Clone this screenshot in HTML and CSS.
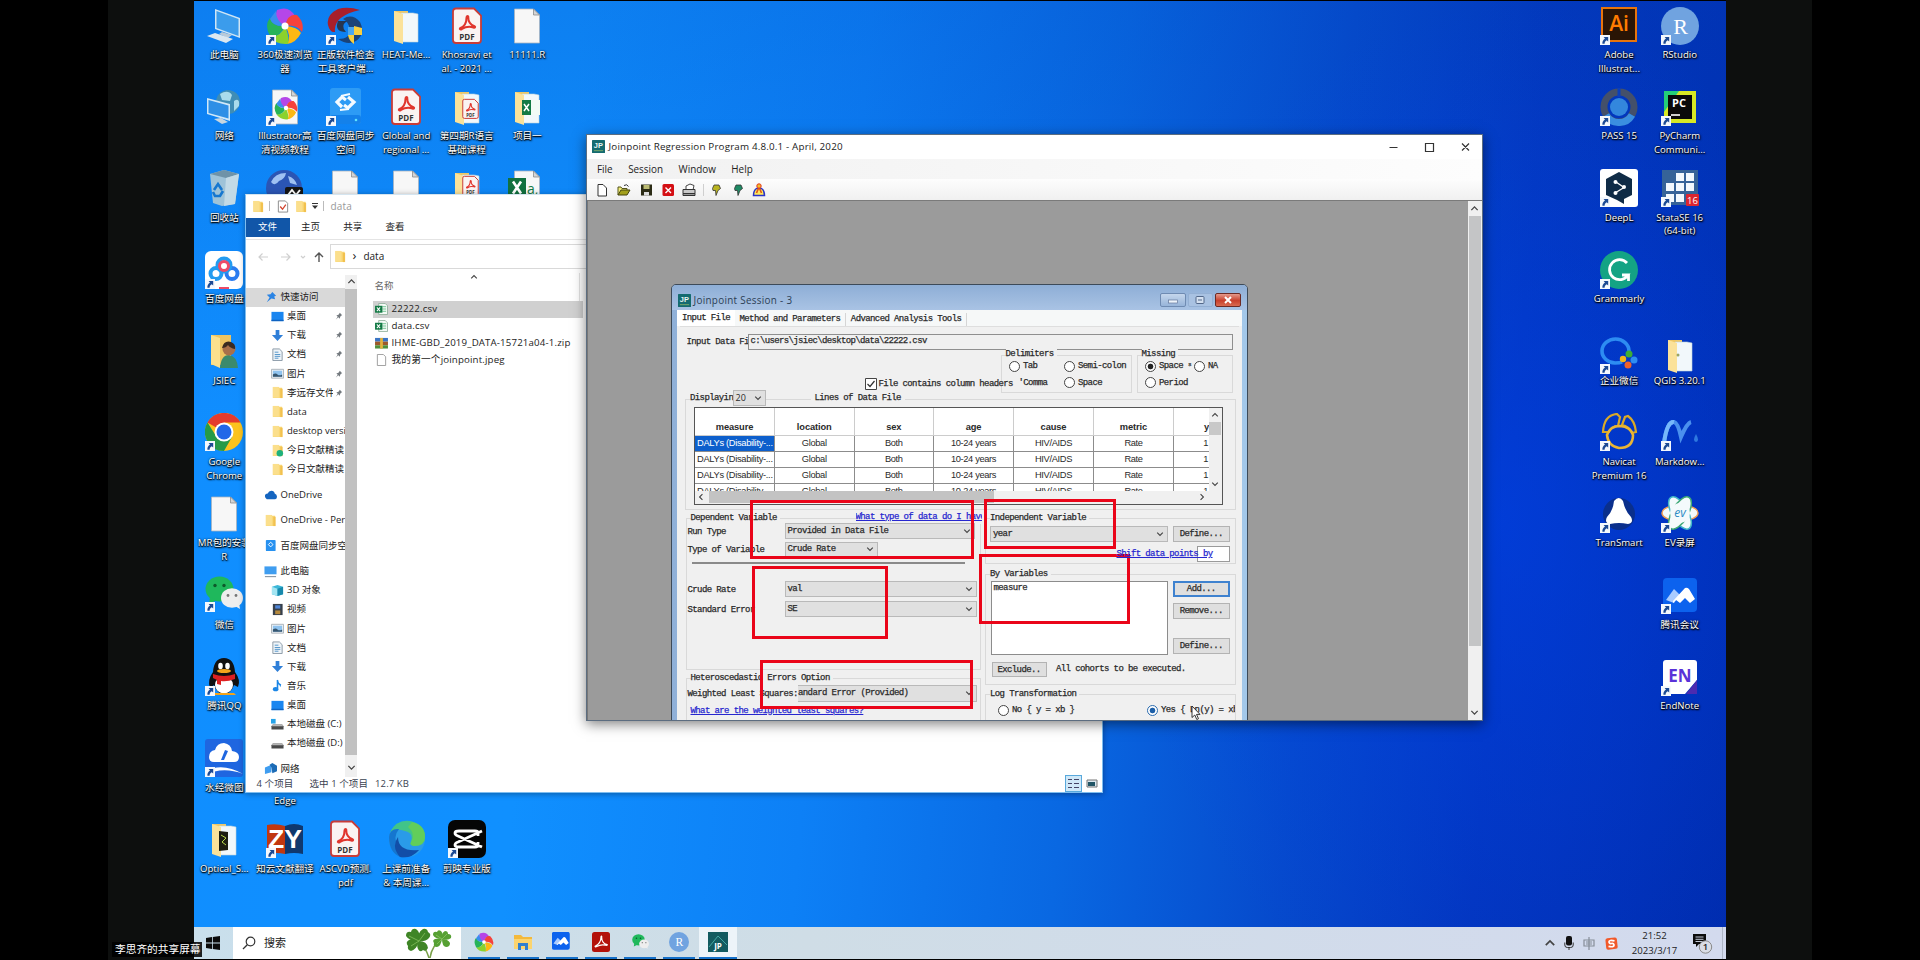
FILE: index.html
```html
<!DOCTYPE html>
<html lang="zh-CN">
<head>
<meta charset="utf-8">
<title>Desktop</title>
<link rel="stylesheet" href="styles.css">
</head>
<body>
<svg class="defs" width="0" height="0">
  <defs>
    <symbol id="arrow" viewBox="0 0 10 10"><rect width="10" height="10" fill="#f4f8fd"/><path d="M3.6 2h4.6v4.6L6.7 5.2C5.2 6 4.6 7 4.6 8.8H2.4C2.2 6.300 3.200 4.700 5 3.500z" fill="#1c4a94"/></symbol>
    <symbol id="folder" viewBox="0 0 12 14"><path d="M1 1h6l1 1h3v11H1z" fill="#f9d775"/><path d="M9 3h2.500v10H9z" fill="#f2c14f"/><path d="M1 1h6.500v11.500H1z" fill="#fbdf8c"/></symbol>
    <symbol id="page" viewBox="0 0 38 38"><path d="M6.500 2h19l6 6v28h-25z" fill="#f7f7f7" stroke="#a9b4bf" stroke-width=".8"/><path d="M25.500 2v6h6z" fill="#d5d5d5" stroke="#8b8b8b" stroke-width=".8"/></symbol>
    <symbol id="pdf" viewBox="0 0 38 38"><path d="M8 1.500h18l7 7V33q0 3-3 3H8q-3 0-3-3V4.500q0-3 3-3z" fill="#faf3f2" stroke="#c93c38" stroke-width="1.800"/><path d="M12.500 21c5-2 6-6 6-10.500 0-2 2-2 1.800 0-.3 4 2.500 7.500 5.700 8.500 2 .7 1 2-.6 1.500-4.400-1.300-7.400-1-11.400 1.500-2 1-2.900-.3-1.500-1z" fill="none" stroke="#e0352d" stroke-width="2"/><text x="19" y="33" font-size="8" font-weight="700" text-anchor="middle" fill="#333" font-family="Open Sans">PDF</text></symbol>
    <symbol id="openfolder" viewBox="0 0 38 38"><path d="M7 4h14v30H7z" fill="#efc867"/><path d="M14 6h12l5 1v28H15z" fill="#f2f8fb" stroke="#bdd3dc" stroke-width=".6"/><path d="M7 4l9 3v30l-9-3z" fill="#fbe29a"/></symbol>
    <symbol id="pinwheel" viewBox="0 0 38 38"><path d="M19 19Q6 17 11 3q12-5 18 6Q22 8 19 19z" fill="#b546e8"/><path d="M19 19Q22 6 31 8q8 8 5 17-6-8-17-6z" fill="#f5423b"/><path d="M19 19q13 1 16 7-5 10-14 11Q26 29 19 19z" fill="#fdb813"/><path d="M19 19q5 12 3 18-13 1-18-8 11 1 15-10z" fill="#8bd22c"/><path d="M19 19Q13 31 4 29-2 18 4 11q3 9 15 8z" fill="#27b358"/><path d="M19 19Q7 20 4 12l6-8q0 10 9 15z" fill="#3a8df0"/><circle cx="19" cy="19" r="3.500" fill="#fff"/></symbol>
    <symbol id="jp" viewBox="0 0 14 14"><rect width="14" height="14" rx=".6" fill="#146b70"/><text x="7" y="8.800" font-size="8" font-weight="700" fill="#eaf6f4" text-anchor="middle" font-family="Liberation Sans">JP</text><path d="M2 11.500h10" stroke="#7fae6c" stroke-width="1"/></symbol>
    <symbol id="acro" viewBox="0 0 18 20"><rect width="18" height="20" rx="2.500" fill="#b3110a"/><path d="M3.500 14c4-2 5.500-5 5.500-9 0-1.500 1-1 .7.400C9.500 9 12 12 14.500 12.400c1.600.3.600 1.200-.9.800-3.600-.9-6-.4-8.900 1.300-1.200.8-2.200 0-1.200-.5z" stroke="#fff" fill="none" stroke-width="1.200"/></symbol>
    <symbol id="wechat" viewBox="0 0 38 38"><ellipse cx="14.500" cy="13" rx="14" ry="12.500" fill="#1fb85c"/><path d="M5 21l-1 7 8-4z" fill="#1fb85c"/><circle cx="10" cy="9.500" r="1.700" fill="#0d5a2b"/><circle cx="19" cy="9.500" r="1.700" fill="#0d5a2b"/><ellipse cx="27" cy="22" rx="11" ry="9.800" fill="#eee"/><path d="M30 30l5 3-1-6z" fill="#eee"/><circle cx="23" cy="19.500" r="1.400" fill="#777"/><circle cx="31" cy="19.500" r="1.400" fill="#777"/></symbol>
    <symbol id="rstudio" viewBox="0 0 38 38"><circle cx="19" cy="19" r="19" fill="#70a3e0"/><text x="19.500" y="26.500" font-size="22" text-anchor="middle" fill="#fff" font-family="Liberation Serif">R</text></symbol>
    <symbol id="meet" viewBox="0 0 38 38"><rect x="2" y="2" width="34" height="34" rx="4" fill="#0c62ee"/><path d="M5 24l8-11 6 6-6 8z" fill="#a9cbff"/><path d="M12 25l12-13q2-1 4 1l6 10-5 4-5-5-5 5-4-3-3 3z" fill="#fff"/></symbol>
    <symbol id="csv" viewBox="0 0 14 13"><path d="M4 .5h7L13.500 3v9.500H4z" fill="#f4faf6" stroke="#82a58f" stroke-width=".8"/><path d="M8 4h4M8 6.500h4M8 9h4" stroke="#6cc28f"/><rect y="3" width="8" height="7.500" fill="#137a45"/><path d="M2 4.800l3.500 4M5.500 4.800L2 8.800" stroke="#fff" stroke-width="1.100"/></symbol>
    <symbol id="desk" viewBox="0 0 14 14"><path d="M.5 2h13v10H.5z" fill="#1a86f0"/><path d="M.5 10.500h13V12H.5z" fill="#0e62c0"/></symbol>
    <symbol id="down" viewBox="0 0 14 14"><path d="M5 1h4v5.500h4L7 13 1 6.500h4z" fill="#2f7fd8"/></symbol>
    <symbol id="doc" viewBox="0 0 14 14"><path d="M2 1h7l3 3v9.500H2z" fill="#eef4f8" stroke="#8796a4"/><path d="M4 4.500h4M4 7h6M4 9h6M4 11h4" stroke="#4d91c8"/></symbol>
    <symbol id="pic" viewBox="0 0 14 14"><path d="M.5 2.500h13v9.500H.5z" fill="#eef2f5" stroke="#a9b1b8"/><path d="M2 4h10v6.500H2z" fill="#8fc3ef"/><path d="M2 8q3-2 5 0t5 0v2.500H2z" fill="#36566f"/></symbol>
    <symbol id="pin" viewBox="0 0 10 10"><path d="M6 1l3 3-1 .5L6.500 6 6 8.500 4.200 6.700 1 9.500 3.400 6 1.700 4 4 3.600 5.500 2z" fill="#73797e"/></symbol>
    <symbol id="chev" viewBox="0 0 10 10"><path d="M1.500 3.200L5 6.800l3.500-3.600" fill="none" stroke="#444" stroke-width="1.400"/></symbol>
    <symbol id="disk" viewBox="0 0 14 14"><path d="M2 7h10l1.500 2v3.500h-13V9z" fill="#4a4a4a"/><path d="M2 7h10l1.500 2h-13z" fill="#b6b6b6"/></symbol>
  </defs>
</svg>

<div class="stage">
  <div class="bezel"></div>
  <main class="desktop">
    <div class="icons">
      <div class="col">
        <div class="ico"><svg viewBox="0 0 38 38"><path d="M10 2l25 9v20l-25-9z" fill="#cfe5f5"/><path d="M11.500 4l22 8v17l-22-8z" fill="#3b9cec"/><path d="M17 25l10 3-4 3-9-4z" fill="#b9cad8"/><path d="M2 29l8-3 18 6-7 4z" fill="#dbe7f0"/></svg><span>此电脑</span></div>
        <div class="ico"><svg viewBox="0 0 38 38"><circle cx="23" cy="14" r="12" fill="#3f8db5"/><path d="M15 6q8-5 12 1l-2 6-8-1zM29 13q6-4 5 5l-5 5z" fill="#a9dcec"/><path d="M2 10l23 6v17L2 26z" fill="#d0e8f8"/><path d="M3.500 12l20 5.500v13L3.500 25z" fill="#2e8fe6"/><path d="M9 31l7-1 7 4-6 2z" fill="#c8d6e0"/></svg><span>网络</span></div>
        <div class="ico"><svg viewBox="0 0 38 38"><path d="M5 5l14-4 15 4-4 30-13 2-9-3z" fill="#9fc3d8"/><path d="M5 5l14-4 15 4-13 4z" fill="#6f93a8"/><path d="M21 9l13-4-4 30-11 2z" fill="#c3dae6"/><path d="M9 21l4-6 4 6M18 22l-3 5h-5l-2-4" fill="none" stroke="#1677cf" stroke-width="2.600"/></svg><span>回收站</span></div>
        <div class="ico"><svg viewBox="0 0 38 38"><rect width="38" height="38" rx="6" fill="#fff"/><g fill="none" stroke-width="4"><circle cx="11" cy="22.500" r="5.500" stroke="#239cf0"/><circle cx="27" cy="22.500" r="5.500" stroke="#2a7cf0"/><circle cx="19" cy="14" r="6.500" stroke="#239cf0"/><circle cx="19" cy="15" r="4.500" stroke="#ee4a67" stroke-width="3"/></g><path d="M14 37h10" stroke="#ee4a67" stroke-width="2"/><use href="#arrow" y="28" width="10" height="10"/></svg><span>百度网盘</span></div>
        <div class="ico"><svg viewBox="0 0 38 38"><path d="M6 3h20v30H6z" fill="#eec461"/><path d="M6 3l9 3v30l-9-4z" fill="#fbe08d"/><path d="M15 36q1-13 9-13 8 1 9 13z" fill="#3b8a6d"/><circle cx="24" cy="17" r="6.500" fill="#a86f4a"/><path d="M17 16q2-8 9-6 5 2 4 7-5-1-7-4-2 3-6 3z" fill="#3a2a20"/></svg><span>JSIEC</span></div>
        <div class="ico"><svg viewBox="0 0 38 38"><circle cx="19" cy="19" r="19" fill="#fcc31e"/><path d="M19 19L2.500 9.500A19 19 0 0 1 35.500 9.500H19z" fill="#e33b2e"/><path d="M2.500 9.500A19 19 0 0 0 19 38l8-14-16-1z" fill="#259a48"/><circle cx="19" cy="19" r="9.500" fill="#fff"/><circle cx="19" cy="19" r="7.500" fill="#2267e8"/><use href="#arrow" y="28" width="10" height="10"/></svg><span>Google<br>Chrome</span></div>
        <div class="ico"><svg><use href="#page"/></svg><span>MR包的安装<br>R</span></div>
        <div class="ico"><svg viewBox="0 0 38 38"><use href="#wechat"/><use href="#arrow" y="26" width="10" height="10"/></svg><span>微信</span></div>
        <div class="ico"><svg viewBox="0 0 38 38"><path d="M8 14Q9 0 19 0t11 14q6 8 3 15l-4-2Q26 36 19 36T9 27l-4 3q-3-8 3-16z" fill="#111"/><ellipse cx="19" cy="27" rx="9" ry="8.500" fill="#fff"/><ellipse cx="15.500" cy="8" rx="2.300" ry="3.200" fill="#fff"/><ellipse cx="22.500" cy="8" rx="2.300" ry="3.200" fill="#fff"/><ellipse cx="19" cy="13" rx="7" ry="2" fill="#f3a41b"/><path d="M8 16q11 4 22 0v5q-8 3-14 2v4l-4-1v-4l-4-2z" fill="#dd2021"/><path d="M9 35h20l2 2H7z" fill="#f3a41b"/><use href="#arrow" y="28" width="10" height="10"/></svg><span>腾讯QQ</span></div>
        <div class="ico"><svg viewBox="0 0 38 38"><rect width="38" height="38" rx="3" fill="#1f66e0"/><path d="M4 18q0-6 6-7 2-7 9-7 7 1 8 8 7 1 7 6 0 5-5 5H9q-5 0-5-5z" fill="#fff"/><path d="M16 21l4-10 3 1-4 9z" fill="#1f66e0"/><path d="M0 32q18-9 38 3Q18 27 0 36z" fill="#fff"/><use href="#arrow" y="28" width="10" height="10"/></svg><span>水经微图</span></div>
        <div class="ico"><svg viewBox="0 0 38 38"><use href="#openfolder"/><path d="M14 11l9 1v18l-9 1z" fill="#1d1d12"/><path d="M16 15l5 3-4 4 4 3" stroke="#b9d84c" fill="none"/></svg><span>Optical_S...</span></div>
      </div>
      <div class="col">
        <div class="ico"><svg viewBox="0 0 38 38"><use href="#pinwheel"/><use href="#arrow" y="28" width="10" height="10"/></svg><span>360极速浏览<br>器</span></div>
        <div class="ico"><svg viewBox="0 0 38 38"><use href="#page"/><use href="#pinwheel" x="8" y="8" width="24" height="24"/><use href="#arrow" y="28" width="10" height="10"/></svg><span>Illustrator高<br>清视频教程</span></div>
        <div class="ico"><svg viewBox="0 0 38 38"><circle cx="18" cy="19" r="18" fill="#2b55b4"/><path d="M5 13Q9 4 20 4q-1 6-7 8-4 6-8 1zM22 7q7 2 9 9l-7-2z" fill="#9fc1f2"/><rect x="19" y="18" width="18" height="12" rx="2" fill="#151515"/><path d="M22 26l4-5 4 5 4-5" stroke="#fff" fill="none" stroke-width="2"/></svg></div>
        <div class="skip"></div>
        <div class="ico"><svg></svg><span>Microsoft<br>Edge</span></div>
        <div class="ico"><svg viewBox="0 0 38 38"><path d="M1 5q9-2 18 1v28q-9-2-18 0z" fill="#c1370f"/><path d="M19 6q9-4 18 0v28q-9-2-18 0z" fill="#10386e"/><text x="19" y="28" font-size="25" font-weight="700" fill="#fff" text-anchor="middle" textLength="34" lengthAdjust="spacingAndGlyphs" font-family="Liberation Sans">ZY</text><use href="#arrow" y="28" width="10" height="10"/></svg><span>知云文献翻译</span></div>
      </div>
      <div class="col">
        <div class="ico"><svg viewBox="0 0 38 38"><path d="M34 3Q22-1 12 2 0 8 2 18q2 8 7 7-2-16 25-22z" fill="#a81f2b"/><path d="M17 12q9-6 17 3 6 12-4 19-8 5-18-2 12 0 12-9-1-8-7-11z" fill="#1b4378"/><path d="M12 14q-4 11 8 11-6-6 1-11z" fill="#273650"/><path d="M22 20h6v8h-6z" fill="#4aa7f0"/><path d="M28 19l8 2v7h-8zM22 28h6v9q-5-3-6-9z" fill="#f8cf3e"/><use href="#arrow" y="28" width="10" height="10"/></svg><span>正版软件检查<br>工具客户端...</span></div>
        <div class="ico"><svg viewBox="0 0 38 38"><rect x="4" y="0" width="31" height="36" rx="3" fill="#2d9bf5"/><rect x="4" y="27" width="31" height="9" rx="3" fill="#1481ea"/><g fill="none" stroke="#f5fbff" stroke-width="3.200"><path d="M16 19l-5-5 5-5 4 3M22 9l6 5-6 6-4-3"/><path d="M15 8l9-2M23 21l-9 1" stroke-width="2"/></g><circle cx="30" cy="32" r="1.300" fill="#5fe2ff"/><use href="#arrow" y="28" width="10" height="10"/></svg><span>百度网盘同步<br>空间</span></div>
        <div class="ico"><svg><use href="#page"/></svg></div>
        <div class="skip"></div>
        <div class="skip one"></div>
        <div class="ico"><svg><use href="#pdf"/></svg><span>ASCVD预测.<br>pdf</span></div>
      </div>
      <div class="col">
        <div class="ico"><svg><use href="#openfolder"/></svg><span>HEAT-Me...</span></div>
        <div class="ico"><svg><use href="#pdf"/></svg><span>Global and<br>regional ...</span></div>
        <div class="ico"><svg><use href="#page"/></svg></div>
        <div class="skip"></div>
        <div class="skip one"></div>
        <div class="ico"><svg viewBox="0 0 38 38"><circle cx="20" cy="19" r="18" fill="#2a9be8"/><path d="M3 12Q10-1 23 1q15 3 15 16 0 9-11 9-5-1-3-4 3-9-6-11Q9 8 3 12z" fill="#41c489"/><path d="M25 2q13 3 13 15 0 9-11 9-5-1-3-4 5-8-3-15z" fill="#62ce5a"/><path d="M2 17q1-9 10-8-5 6-3 12 5 13 23 9-8 9-19 7Q2 32 2 17z" fill="#1576cf"/><path d="M11 17q0 15 21 13-8 9-19 7-9-10-2-20z" fill="#124ea8"/></svg><span>上课前准备<br>&amp; 本周课...</span></div>
      </div>
      <div class="col">
        <div class="ico"><svg><use href="#pdf"/></svg><span>Khosravi et<br>al. - 2021 ...</span></div>
        <div class="ico"><svg viewBox="0 0 38 38"><use href="#openfolder"/><use href="#pdf" x="12" y="7" width="21" height="28"/></svg><span>第四期R语言<br>基础课程</span></div>
        <div class="ico"><svg viewBox="0 0 38 38"><use href="#openfolder"/><use href="#pdf" x="12" y="3" width="21" height="28"/></svg></div>
        <div class="skip"></div>
        <div class="skip one"></div>
        <div class="ico"><svg viewBox="0 0 38 38"><rect width="38" height="38" rx="7" fill="#050505"/><path d="M30 16v-3q0-2-3-2H11q-4 0-4 2 0 2 3 3l24 11M30 22v3q0 2-3 2H11q-4 0-4-2 0-2 3-3l24-11" fill="none" stroke="#fff" stroke-width="2.800"/><use href="#arrow" y="28" width="10" height="10"/></svg><span>剪映专业版</span></div>
      </div>
      <div class="col">
        <div class="ico"><svg><use href="#page"/></svg><span>11111.R</span></div>
        <div class="ico"><svg viewBox="0 0 38 38"><use href="#openfolder"/><rect x="21" y="12" width="11" height="15" fill="#f3fbf6"/><rect x="14" y="12" width="9" height="15" fill="#137a45"/><path d="M16 16l5 7M21 16l-5 7" stroke="#fff" stroke-width="1.500"/></svg><span>项目一</span></div>
        <div class="ico"><svg viewBox="0 0 38 38"><use href="#page"/><text x="19" y="25" font-size="14" fill="#137a45" font-family="Open Sans">a,</text><rect x="0" y="9" width="18" height="19" fill="#12713f"/><path d="M5 12.500l8 12M13 12.500l-8 12" stroke="#fff" stroke-width="2.600"/></svg></div>
      </div>
      <div class="col right">
        <div class="ico"><svg viewBox="0 0 38 38"><rect x="2" y="1" width="34" height="33" fill="#2a1505" stroke="#e8740c" stroke-width="2"/><text x="19" y="24" font-size="21" text-anchor="middle" fill="#ff7c00" font-family="Open Sans" font-weight="600">Ai</text><use href="#arrow" y="28" width="10" height="10"/></svg><span>Adobe<br>Illustrat...</span></div>
        <div class="ico"><svg viewBox="0 0 38 38"><circle cx="19" cy="19" r="15" fill="none" stroke="#44506a" stroke-width="7"/><path d="M6 27a15 15 0 0 0 26 0" stroke="#3a8ee0" stroke-width="7" fill="none"/><path d="M19 0v9" stroke="#0b3fbc" stroke-width="3"/><circle cx="19" cy="19" r="9" fill="#3387dd"/><use href="#arrow" y="28" width="10" height="10"/></svg><span>PASS 15</span></div>
        <div class="ico"><svg viewBox="0 0 38 38"><rect width="38" height="38" rx="3" fill="#fff"/><path d="M19 3l13 7v16l-8 4v5l-7-4L6 26V10z" fill="#0f2b46"/><path d="M16 13l8 5.500-9 5.500" stroke="#fff" fill="none" stroke-width="1.300"/><circle cx="15.500" cy="13" r="2" fill="#fff"/><circle cx="24" cy="18" r="2" fill="#fff"/><circle cx="15.500" cy="24" r="2" fill="#fff"/><use href="#arrow" y="28" width="10" height="10"/></svg><span>DeepL</span></div>
        <div class="ico"><svg viewBox="0 0 38 38"><circle cx="19" cy="19" r="19" fill="#14a384"/><path d="M27 12a10 10 0 1 0 1 12h-6M28.500 30v-6.500" fill="none" stroke="#fff" stroke-width="2.800"/><use href="#arrow" y="28" width="10" height="10"/></svg><span>Grammarly</span></div>
        <div class="ico low"><svg viewBox="0 0 38 38"><path d="M29 15A13.500 12 0 1 0 15 27q5 0 7-1" fill="none" stroke="#2d8cf2" stroke-width="3.600"/><circle cx="29" cy="18" r="3.500" fill="#3fae33"/><circle cx="34" cy="24" r="3.500" fill="#2d8cf2"/><circle cx="28" cy="29" r="3.500" fill="#f0622a"/><circle cx="23" cy="23" r="3.200" fill="#f2b51d"/><use href="#arrow" y="28" width="10" height="10"/></svg><span>企业微信</span></div>
        <div class="ico"><svg viewBox="0 0 38 38"><path d="M3 19Q4 2 17 1l3 3-2 9Q11 13 9 19zM22 12l3-8 3-1q7 5 8 16l-4 1q-3-7-10-8z" fill="none" stroke="#d9a928" stroke-width="2.200"/><path d="M7 22q3-9 13-9 11 1 13 9 0 13-14 13Q8 33 7 22z" fill="none" stroke="#e9b535" stroke-width="2.600"/><use href="#arrow" y="28" width="10" height="10"/></svg><span>Navicat<br>Premium 16</span></div>
        <div class="ico"><svg viewBox="0 0 38 38"><circle cx="19" cy="19" r="16" fill="#0a2f8c"/><path d="M14 6q5-6 9 0 2 10 8 16 3 6-3 7-9-2-18 0-6-1-3-7 6-6 7-16z" fill="#fff"/><use href="#arrow" y="28" width="10" height="10"/></svg><span>TranSmart</span></div>
      </div>
      <div class="col">
        <div class="ico"><svg viewBox="0 0 38 38"><use href="#rstudio"/><use href="#arrow" y="28" width="10" height="10"/></svg><span>RStudio</span></div>
        <div class="ico"><svg viewBox="0 0 38 38"><path d="M3 3h32v32H3z" fill="#d7e825"/><path d="M3 3h15L3 24z" fill="#24cf78"/><rect x="7" y="7" width="24" height="24" fill="#0a0a0a"/><text x="18" y="18.500" font-size="11" text-anchor="middle" font-weight="700" fill="#fff" font-family="Open Sans">PC</text><path d="M10 27h9" stroke="#fff" stroke-width="1.600"/><use href="#arrow" y="28" width="10" height="10"/></svg><span>PyCharm<br>Communi...</span></div>
        <div class="ico"><svg viewBox="0 0 38 38"><rect x="1" y="1" width="36" height="35" fill="#366398"/><path d="M15 4h8v8h-8zM25 4h8v8h-8zM5 14h8v8H5zM15 14h8v8h-8zM25 14h8v8h-8zM5 25h8v8H5zM15 25h8v8h-8z" fill="#f2f8fd"/><rect x="25" y="25" width="13" height="12" rx="1" fill="#dc2530"/><text x="31.500" y="34.500" font-size="9.500" text-anchor="middle" fill="#fff" font-family="Open Sans">16</text><use href="#arrow" y="28" width="10" height="10"/></svg><span>StataSE 16<br>(64-bit)</span></div>
        <div class="skip one"></div>
        <div class="ico low"><svg viewBox="0 0 38 38"><use href="#openfolder"/><circle cx="17" cy="19" r="1.500" fill="#9aa466"/></svg><span>QGIS 3.20.1</span></div>
        <div class="ico"><svg viewBox="0 0 38 38"><path d="M3 30Q6 8 13 9q4 1 7 15 6-14 10-15" fill="none" stroke="#4a90ee" stroke-width="4"/><path d="M3 30Q6 8 13 9" fill="none" stroke="#76b7fa" stroke-width="4"/><path d="M35 21q4 7 0 8-4-1 0-8z" fill="#2e78e0"/><use href="#arrow" y="28" width="10" height="10"/></svg><span>Markdow...</span></div>
        <div class="ico"><svg viewBox="0 0 38 38"><g fill="#f4fafc" stroke-width="1.500"><ellipse cx="19" cy="18" rx="18" ry="8" stroke="#ee9c55"/><ellipse cx="19" cy="18" rx="18" ry="8" transform="rotate(60 19 18)" stroke="#43b8c8"/><ellipse cx="19" cy="18" rx="18" ry="8" transform="rotate(120 19 18)" stroke="#3fa977"/></g><circle cx="19" cy="18" r="10" fill="#f4fafc"/><text x="19" y="22" font-size="12" text-anchor="middle" font-style="italic" fill="#2c8bc4" font-family="Open Sans">ev</text><use href="#arrow" y="28" width="10" height="10"/></svg><span>EV录屏</span></div>
        <div class="ico"><svg viewBox="0 0 38 38"><use href="#meet"/><use href="#arrow" y="28" width="10" height="10"/></svg><span>腾讯会议</span></div>
        <div class="ico"><svg viewBox="0 0 38 38"><path d="M5 2h28q3 0 3 3v17L24 36H5q-3 0-3-3V5q0-3 3-3z" fill="#fff"/><path d="M36 22v14H25z" fill="#4b2bb0"/><text x="19" y="24" font-size="17" font-weight="700" text-anchor="middle" fill="#5a32d8" font-family="Open Sans">EN</text><use href="#arrow" y="28" width="10" height="10"/></svg><span>EndNote</span></div>
      </div>
    </div>

    <section class="explorer">
      <div class="ex-title"><svg class="i12"><use href="#folder"/></svg><i></i><svg class="i12" viewBox="0 0 12 14"><path d="M1 1h7.500L11 3.500V13H1z" fill="#fff" stroke="#888"/><path d="M3 7l2.500 3L9 5" fill="none" stroke="#d2452f" stroke-width="1.400"/></svg><svg class="i12"><use href="#folder"/></svg><svg class="tri" viewBox="0 0 6 6"><path d="M0 0h6v1H0zM0 2.500h6L3 6z" fill="#333"/></svg><i></i><span>data</span></div>
      <div class="ex-tabs"><b>文件</b><span>主页</span><span>共享</span><span>查看</span></div>
      <div class="ex-addr">
        <svg viewBox="0 0 76 14"><path d="M14 7H5M8.500 3.500L5 7l3.500 3.500M27 7h9M32.500 3.500L36 7l-3.500 3.500M47 6l2 2 2-2" stroke="#cfcfcf" fill="none" stroke-width="1.200"/><path d="M65 12V3M61 7l4-4 4 4" stroke="#555" fill="none" stroke-width="1.400"/></svg>
        <div class="addr"><svg class="i12"><use href="#folder"/></svg><em>›</em><span>data</span></div>
      </div>
      <div class="ex-body">
        <nav>
          <p class="root sel"><svg viewBox="0 0 14 14"><path d="M9 1l4 4-2 1 1 3-4-1-5 4 3-5-3-3 4-.500z" fill="#2b84e4"/></svg>快速访问</p>
          <p><svg><use href="#desk"/></svg>桌面<svg class="pin"><use href="#pin"/></svg></p>
          <p><svg><use href="#down"/></svg>下载<svg class="pin"><use href="#pin"/></svg></p>
          <p><svg><use href="#doc"/></svg>文档<svg class="pin"><use href="#pin"/></svg></p>
          <p><svg><use href="#pic"/></svg>图片<svg class="pin"><use href="#pin"/></svg></p>
          <p><svg><use href="#folder"/></svg><span class="cut">李远存文件</span><svg class="pin"><use href="#pin"/></svg></p>
          <p><svg><use href="#folder"/></svg>data</p>
          <p><svg><use href="#folder"/></svg>desktop version</p>
          <p><svg viewBox="0 0 14 14"><use href="#folder"/><circle cx="9.500" cy="10" r="3.500" fill="#1eb17c"/></svg>今日文献精读</p>
          <p><svg><use href="#folder"/></svg>今日文献精读</p>
          <p class="root"><svg viewBox="0 0 14 14"><path d="M1 9q0-3 3-3 1-3 4-3t3.500 3Q14 7 14 9.500T12 12H3q-2-1-2-3z" fill="#1565c0"/></svg>OneDrive</p>
          <p class="root"><svg><use href="#folder"/></svg>OneDrive - Per</p>
          <p class="root"><svg viewBox="0 0 14 14"><rect x="2" y="1" width="10.500" height="12" rx="1" fill="#2791f0"/><path d="M7.200 3.500l2.500 2.500-2.500 2.500L4.700 6z" fill="none" stroke="#fff"/></svg>百度网盘同步空</p>
          <p class="root"><svg viewBox="0 0 14 14"><path d="M.5 1.500h13V10H.5z" fill="#3f9df0"/><path d="M1 12.500h12" stroke="#8796a4" stroke-width="1.200"/></svg>此电脑</p>
          <p><svg viewBox="0 0 14 14"><path d="M1 3l6-2 6 2v8l-6 2-6-2z" fill="#3bb7d8"/><path d="M1 3l6 2v8l-6-2z" fill="#a3e5f2"/><path d="M7 5l6-2v8l-6 2z" fill="#1889ac"/></svg>3D 对象</p>
          <p><svg viewBox="0 0 14 14"><path d="M2 1h10.500v12H2z" fill="#37404c"/><path d="M4.500 2.500H10V6H4.500z" fill="#4f86d8"/><path d="M4.500 8H10v4H4.500z" fill="#b5893d"/></svg>视频</p>
          <p><svg><use href="#pic"/></svg>图片</p>
          <p><svg><use href="#doc"/></svg>文档</p>
          <p><svg><use href="#down"/></svg>下载</p>
          <p><svg viewBox="0 0 14 14"><path d="M7 1v9" stroke="#1b86e6" stroke-width="1.700"/><path d="M7 1q1 3 4 5l-1 3q0-3-3-4z" fill="#1b86e6"/><ellipse cx="5" cy="11" rx="3" ry="2.300" fill="#1b86e6"/></svg>音乐</p>
          <p><svg><use href="#desk"/></svg>桌面</p>
          <p><svg viewBox="0 0 14 14"><use href="#disk"/><path d="M0 1h5v5H0z" fill="#27a3e8"/></svg>本地磁盘 (C:)</p>
          <p><svg><use href="#disk"/></svg>本地磁盘 (D:)</p>
          <p class="root"><svg viewBox="0 0 14 14"><path d="M1 6l7-3v8l-7 2z" fill="#3f9df0"/><path d="M6 3l3-2 5 3v6l-5 2-1-6z" fill="#1d6cb6"/></svg>网络</p>
        </nav>
        <div class="ex-scroll"><svg class="up"><use href="#chev"/></svg><i></i><svg><use href="#chev"/></svg></div>
        <div class="files">
          <div class="fh">名称<svg class="up"><use href="#chev"/></svg></div>
          <p class="on"><svg><use href="#csv"/></svg>22222.csv</p>
          <p><svg><use href="#csv"/></svg>data.csv</p>
          <p><svg viewBox="0 0 14 13"><path d="M0 1h14v4H0z" fill="#3a75c4"/><path d="M0 5h14v4H0z" fill="#9c5a2a"/><path d="M0 9h14v3.500H0z" fill="#4f8f3a"/><path d="M5.500 1h3v11.500h-3z" fill="#e3b23c"/></svg>IHME-GBD_2019_DATA-15721a04-1.zip</p>
          <p><svg viewBox="0 0 14 13"><path d="M2.500.5h6.500L11.500 3v9.500h-9z" fill="#fff" stroke="#999"/></svg>我的第一个joinpoint.jpeg</p>
        </div>
      </div>
      <div class="ex-status"><span>4 个项目</span><span>选中 1 个项目</span><span>12.7 KB</span><svg viewBox="0 0 34 17"><rect x=".5" y=".5" width="16" height="16" fill="#cfe8f8" stroke="#59a9dc"/><path d="M3 4.500h4M3 8.500h4M3 12.500h4M9 4.500h5M9 8.500h5M9 12.500h5" stroke="#446"/><path d="M22 5h10v7H22z" fill="#dce8f0" stroke="#777"/><path d="M23 7h7v4h-7z" fill="#256"/></svg></div>
    </section>

    <section class="jp">
      <div class="jp-title"><svg class="logo"><use href="#jp"/></svg><span>Joinpoint Regression Program 4.8.0.1 - April, 2020</span>
        <svg class="ctl" viewBox="0 0 84 12"><path d="M2 6h8M38 2h8v8h-8zM74.500 2l7 7M81.500 2l-7 7" transform="translate(.5 .5)" stroke="#333" fill="none" stroke-width="1.200"/></svg></div>
      <div class="jp-menu"><span>File</span><span>Session</span><span>Window</span><span>Help</span></div>
      <div class="jp-tools">
        <svg viewBox="0 0 180 14"><path d="M2 1.500h5L10.500 5v8H2z" fill="#fff" stroke="#333"/><path d="M22 12V4h3l1 1.500h5V7" fill="#f2ee7a" stroke="#55551a"/><path d="M22 12l3-5h9l-3 5z" fill="#a3a01c" stroke="#44440e"/><path d="M28 2.500q3-2 4.500 1" fill="none" stroke="#333"/><rect x="45" y="1.500" width="11" height="11" fill="#2c2c16"/><path d="M47.500 2h6v4h-6z" fill="#bdbd75"/><path d="M48 9h5v3.500h-5z" fill="#ddd"/><rect x="66.500" y="1" width="11.500" height="12" rx="1.500" fill="#d40f14"/><path d="M69.500 4.500l5.500 5.500M75 4.500l-5.500 5.500" stroke="#fff" stroke-width="1.400"/><path d="M90 7V3l4-2 4 1.500-1 4.500" fill="#fff" stroke="#444"/><path d="M87 6.500h12v4H87z" fill="#c9c9c9" stroke="#333"/><path d="M87 12.500h12v-2H87z" fill="#999" stroke="#333"/><path d="M107.500 1v12" stroke="#cfcfcf"/><path d="M118 2h5l1.500 3.500-2.500 2-2 5-.5-5H117l-.5-2z" fill="#b9b420" stroke="#333" stroke-width=".8"/><path d="M140 2h5l1.500 3.500-2.500 2-2 5-.5-5H139l-.5-2z" fill="#1f8a64" stroke="#333" stroke-width=".8"/><path d="M157.500 12.500q0-5 3-7h5q3 2 3 7z" fill="#ffe95a" stroke="#2a33c8" stroke-width="1.500"/><path d="M160.500 10L163 4l2.500 6" stroke="#e2541b" stroke-width="1.600" fill="none"/><circle cx="163" cy="3" r="2.200" fill="#f2c12b" stroke="#e2321b"/></svg>
      </div>
      <div class="mdi">
        <div class="canvas">
          <div class="session">
            <div class="s-title"><svg class="logo"><use href="#jp"/></svg><span>Joinpoint Session - 3</span>
              <div class="s-btns"><b><svg viewBox="0 0 12 8"><rect x="1.500" y="4" width="9" height="3" fill="#eef4fb" stroke="#63779a" stroke-width=".7"/></svg></b><b class="dim"><svg viewBox="0 0 12 8"><rect x="2" y=".5" width="8" height="7" rx="1" fill="#d4e0f0" stroke="#53688a"/><path d="M4 4h4" stroke="#53688a"/></svg></b><b class="x"><svg viewBox="0 0 12 8"><path d="M3 1l6 6M9 1L3 7" stroke="#fff" stroke-width="2"/></svg></b></div></div>
            <div class="client">
              <div class="tabs"><b>Input File</b><span>Method and Parameters</span><span>Advanced Analysis Tools</span></div>
              <div class="page">
                <div class="path"><label>Input Data File</label><div>c:\users\jsiec\desktop\data\22222.csv</div></div>
                <div class="opts">
                  <div class="chk"><svg viewBox="0 0 12 12"><path d="M.5.5h11v11H.5z" fill="#fff" stroke="#444"/><path d="M2.500 6L5 8.500 9.500 3" fill="none" stroke="#333" stroke-width="1.200"/></svg>File contains column headers</div>
                  <div class="group delim"><div class="legend">Delimiters</div><div class="radios"><span><i></i>Tab</span><span><i></i>Semi-colon</span><span class="hid">'Comma</span><span><i></i>Space</span></div></div>
                  <div class="group miss"><div class="legend">Missing</div><div class="radios"><span><i class="on"></i>Space <small>s</small></span><span><i></i>NA</span><span><i></i>Period</span></div></div>
                </div>
                <div class="group data">
                  <div class="dl"><span class="d1">Displaying</span><div class="combo ui">20<svg><use href="#chev"/></svg></div><span class="d2">Lines of Data File</span></div>
                  <div class="grid">
                    <div class="cells">
                      <div class="r h"><span>measure</span><span>location</span><span>sex</span><span>age</span><span>cause</span><span>metric</span><span>y</span></div>
                      <div class="r cur"><span>DALYs (Disability-...</span><span>Global</span><span>Both</span><span>10-24 years</span><span>HIV/AIDS</span><span>Rate</span><span>1</span></div>
                      <div class="r"><span>DALYs (Disability-...</span><span>Global</span><span>Both</span><span>10-24 years</span><span>HIV/AIDS</span><span>Rate</span><span>1</span></div>
                      <div class="r"><span>DALYs (Disability-...</span><span>Global</span><span>Both</span><span>10-24 years</span><span>HIV/AIDS</span><span>Rate</span><span>1</span></div>
                      <div class="r"><span>DALYs (Disability-...</span><span>Global</span><span>Both</span><span>10-24 years</span><span>HIV/AIDS</span><span>Rate</span><span>1</span></div>
                    </div>
                    <div class="vs"><svg class="up"><use href="#chev"/></svg><i></i><svg><use href="#chev"/></svg></div>
                    <div class="hs"><svg class="lf"><use href="#chev"/></svg><i></i><svg class="rt"><use href="#chev"/></svg></div>
                  </div>
                </div>
                <div class="lower">
                  <div class="left">
                    <div class="group dep">
                      <div class="lrow"><div class="legend">Dependent Variable</div><a>What type of data do I have</a></div>
                      <div class="f f1"><label>Run Type</label><div class="combo">Provided in Data File<svg><use href="#chev"/></svg></div></div>
                      <div class="f f2"><label>Type of Variable</label><div class="combo">Crude Rate<svg><use href="#chev"/></svg></div></div>
                      <div class="rule"></div>
                      <div class="f f3"><label>Crude Rate</label><div class="combo">val<svg><use href="#chev"/></svg></div></div>
                      <div class="f f4"><label>Standard Error</label><div class="combo">SE<svg><use href="#chev"/></svg></div></div>
                    </div>
                    <div class="group het">
                      <div class="legend">Heteroscedastic Errors Option</div>
                      <div class="f f5"><label>Weighted Least Squares:</label><div class="combo">andard Error (Provided)<svg><use href="#chev"/></svg></div></div>
                      <a>What are the weighted least squares?</a>
                    </div>
                  </div>
                  <div class="rightc">
                    <div class="group ind">
                      <div class="legend">Independent Variable</div>
                      <div class="g1"><div class="combo">year<svg><use href="#chev"/></svg></div><div class="btn">Define...</div></div>
                      <div class="g2"><a>Shift data points by</a><div></div></div>
                    </div>
                    <div class="group byv">
                      <div class="legend">By Variables</div>
                      <div class="g3"><div class="list">measure</div><div class="bcol"><div class="btn focus">Add...</div><div class="btn">Remove...</div><div class="btn last">Define...</div></div></div>
                      <div class="g4"><div class="btn">Exclude..</div><span>All cohorts to be executed.</span></div>
                    </div>
                    <div class="group logt">
                      <div class="legend">Log Transformation</div>
                      <div class="g5"><span><i></i>No { y = xb }</span><span><i class="on blue"></i>Yes { Ln(y) = xb</span></div>
                    </div>
                  </div>
                </div>
              </div>
            </div>
          </div>
        </div>
        <div class="m-scroll"><svg class="up"><use href="#chev"/></svg><i></i><svg><use href="#chev"/></svg></div>
      </div>
    </section>

    <div class="mark a"></div><div class="mark b"></div><div class="mark c"></div><div class="mark d"></div><div class="mark e"></div>
    <svg class="cursor" viewBox="0 0 10 16"><path d="M1 1v11.500l2.800-2.500 2 4.500 1.700-.8-2-4.300H9z" fill="#fff" stroke="#222" stroke-width=".9"/></svg>

    <footer class="taskbar">
      <svg class="win" viewBox="0 0 14 14"><path d="M0 2l6-.9v5.500H0zM6.800 1L14 0v6.600H6.800zM0 7.400h6v5.500L0 12zM6.800 7.400H14V14l-7.200-1z" fill="#0b0b0b"/></svg>
      <div class="search"><svg class="glass" viewBox="0 0 14 14"><circle cx="8.500" cy="5.500" r="4.300" fill="none" stroke="#333" stroke-width="1.200"/><path d="M5.300 8.700L1 13" stroke="#333" stroke-width="1.300"/></svg><span>搜索</span>
        <svg class="clover" viewBox="0 0 48 30"><path d="M15 14q6 6 9 16M36 12q-9 5-11 18" fill="none" stroke="#7aa04a" stroke-width="1.500"/><g fill="#3f8526"><path d="M14 13Q5 14 1 8q0-5 5-4 1-4 5-3 5 3 3 12z"/><path d="M14 13Q12 4 18 1q4-1 5 3 4 2 1 6-4 4-10 3z"/><path d="M14 13q-2 8-8 10-4-1-3-5-3-4 1-6 5-2 10 1z"/><path d="M14 13q8 0 9 7-2 4-5 2-3 3-5-1-2-5 1-8z"/></g><g fill="#56a033"><path d="M37 11q-7 0-9-4 0-4 4-3 1-3 4-1 3 3 1 8z"/><path d="M37 11q-1-6 3-8 3 0 3 3 4 0 3 4-3 3-9 1z"/><path d="M37 11q-1 7-5 8-4 0-3-4-2-3 1-4 4-1 7 0z"/><path d="M37 11q6 0 8 4 0 4-4 4-4-1-4-8z"/></g><path d="M4 8l10 5 6-8M14 13l-8 5M31 7l6 4 5-5M37 11l-5 5" stroke="#8fc766" stroke-width=".7" fill="none"/></svg></div>
      <div class="app"><svg viewBox="0 0 38 38"><use href="#pinwheel"/></svg></div>
      <div class="app"><svg viewBox="0 0 20 20"><path d="M1 3h7l2 2h9v12H1z" fill="#f3b93c"/><path d="M1 7h18v10H1z" fill="#fbd46e"/><path d="M5 11h10v7h-3v-4H8v4H5z" fill="#2f7fd0"/></svg></div>
      <div class="app"><svg viewBox="2 2 34 34"><use href="#meet"/></svg></div>
      <div class="app"><svg><use href="#acro"/></svg></div>
      <div class="app small"><svg viewBox="0 0 38 38"><use href="#wechat"/></svg></div>
      <div class="app"><svg viewBox="0 0 38 38"><use href="#rstudio"/></svg></div>
      <div class="app act"><svg viewBox="0 0 20 20"><rect width="20" height="20" fill="#135b60"/><path d="M1 15L10 4l9 9" stroke="#43a7a4" fill="none"/><text x="10" y="17" font-size="8" font-weight="700" fill="#fff" text-anchor="middle" font-family="Open Sans">JP</text></svg></div>
      <div class="tray">
        <svg class="t1 up"><use href="#chev"/></svg>
        <svg class="t2" viewBox="0 0 10 14"><rect x="2" y="0" width="6" height="9.500" rx="2" fill="#111"/><path d="M.8 6.500V9q0 2.500 2.500 2.500h3.400Q9.200 11.500 9.200 9V6.500M5 11.500V14" stroke="#333" fill="none"/></svg>
        <svg class="t3" viewBox="0 0 12 13"><path d="M1 3h10v6H1zM6 0v13M3 5h6M3 7h6" stroke="#868e98" fill="none" stroke-width="1.200"/></svg>
        <svg class="t4" viewBox="0 0 13 13"><rect x=".8" y=".8" width="11.500" height="11.500" rx="2" fill="#f1592a" transform="rotate(-6 6.500 6.500)"/><path d="M9.500 3.800Q4 2.700 4 4.800T6.500 6.500 9 8.300 3.500 9.300" stroke="#fff" stroke-width="1.700" fill="none"/></svg>
        <div class="clock"><span>21:52</span><span>2023/3/17</span></div>
        <svg class="t5" viewBox="0 0 20 20"><path d="M0 0h13v10H6l-3 3v-3H0z" fill="#0c0c0c"/><path d="M2.500 3h8M2.500 5.300h8M2.500 7.500h8" stroke="#d8dfee" stroke-width=".9"/><circle cx="12.500" cy="13" r="6.200" fill="#d9dde6" stroke="#888"/><text x="12.500" y="16.300" font-size="9.500" font-weight="600" text-anchor="middle" fill="#222" font-family="Open Sans">1</text></svg>
        <i></i>
      </div>
    </footer>
  </main>
  <div class="bezel"></div>
</div>
<div class="sharer">李思齐的共享屏幕</div>
</body>
</html>
```
FILE: styles.css
```css
* { box-sizing: border-box; }
body { margin: 0; background: #000; font: 9.500px/12px "Open Sans", "Noto Sans CJK SC", sans-serif; color: #222; width: 1920px; height: 960px; overflow: hidden; position: relative; }
p { margin: 0; }
.defs { position: absolute; }
svg { display: block; flex: none; }
.up { transform: rotate(180deg); }
.lf { transform: rotate(90deg); }
.rt { transform: rotate(-90deg); }
.stage { display: flex; justify-content: center; height: 959px; }
.bezel { width: 86px; background: #0d0f0e; height: 960px; }
.desktop { position: relative; width: 1532px; height: 958px; margin-top: 1px; overflow: hidden; background:
  radial-gradient(ellipse 380px 520px at 1310px 520px, rgba(0, 66, 236, .55), transparent),
  linear-gradient(180deg, rgba(0, 70, 190, .22), transparent 45%),
  linear-gradient(95deg, #108eff 0, #1090ff 24%, #0d80f6 42%, #0968e2 58%, #064acc 72%, #0335bc 84%, #002cae 100%); }

/* desktop shortcuts */
.icons { display: flex; padding: 5px 16px 0 0; height: 925px; }
.col { width: 60.600px; flex: none; }
.col.right { margin-left: auto; }
.ico { height: 81.400px; display: flex; flex-direction: column; align-items: center; }
.ico > svg { width: 38px; height: 38px; position: relative; top: .5px; }
.ico > span { margin-top: 4px; font-size: 9.600px; line-height: 13.700px; text-align: center; white-space: nowrap; color: #fff; text-shadow: 0 1px 1px #000, 1px 1px 2px #000, 0 0 2px rgba(0, 0, 0, .7); }
.ico.low > svg { top: 4px; }
.skip { height: 488.400px; }
.skip.one { height: 81.400px; }

/* file explorer */
.explorer { position: absolute; left: 50.500px; top: 192.500px; width: 858px; height: 599.500px; background: #fff; border: 1px solid #7dbdf0; border-top-color: #d5e5f0; box-shadow: 0 1px 6px rgba(0, 0, 0, .35); display: flex; flex-direction: column; }
.ex-title { height: 23px; display: flex; align-items: center; padding-left: 6px; color: #999; font-size: 10px; letter-spacing: .15px; }
.ex-title i { width: 1px; height: 10px; background: #bbb; margin: 0 7px 0 5px; }
.ex-title .tri { width: 6px; height: 6px; margin: 0 0 0 5px; }
.ex-title .i12 + .i12 { margin-left: 6px; }
.i12 { width: 12px; height: 13px; }
.ex-tabs { height: 22px; display: flex; border-bottom: 1px solid #e4e4e4; line-height: 18px; }
.ex-tabs b { width: 44px; height: 19px; background: #1156a8; color: #fff; text-align: center; font-weight: 400; }
.ex-tabs span { width: 42.300px; padding-left: 11.500px; }
.ex-addr { display: flex; padding: 4px 0 0 8px; height: 33px; align-items: flex-start; }
.ex-addr > svg { width: 76px; height: 14px; margin-top: 6px; }
.addr { flex: 1; height: 25px; border: 1px solid #d9d9d9; display: flex; align-items: center; padding-left: 3px; font-size: 10px; }
.addr em { font-style: normal; margin: 0 7px 2px 7px; font-size: 13px; }
.ex-body { display: flex; height: 504px; }
nav { width: 99.500px; padding-top: 15px; overflow: hidden; }
nav p { height: 19.150px; padding-left: 25px; display: flex; align-items: center; white-space: nowrap; }
nav p > svg { width: 13px; height: 13px; margin-right: 3.500px; }
nav p.root { padding-left: 18.500px; margin-top: 6.300px; }
nav p.sel { background: #d9d9d9; margin-top: 0; }
nav p .pin { width: 8px; height: 8px; margin: 0 2px 0 auto; }
nav .cut { width: 46px; overflow: hidden; }
.ex-scroll { width: 12px; background: #f0f0f0; display: flex; flex-direction: column; align-items: center; margin-top: 2px; }
.ex-scroll svg { width: 9px; height: 9px; margin: 2px 0 3px; }
.ex-scroll i { width: 12px; height: 466px; background: #c1c1c1; }
.ex-scroll svg:last-child { margin-top: 8px; }
.files { margin-left: 15.500px; width: 210px; }
.fh { height: 28.500px; padding: 7px 0 0 2px; color: #666; position: relative; border-right: 1px solid #e2e2e2; margin-right: 3px; }
.fh svg { position: absolute; left: 97px; top: 0; width: 8px; height: 8px; }
.files p { height: 16.900px; display: flex; align-items: center; padding-left: 2.500px; white-space: nowrap; font-size: 9.700px; letter-spacing: .15px; }
.files p svg { width: 13px; height: 12px; margin-right: 3.500px; }
.files p.on { background: #d0d0d0; }
.ex-status { display: flex; align-items: center; height: 14px; padding: 0 3px 0 11px; color: #3a4250; gap: 16px; line-height: 14px; letter-spacing: .1px; }
.ex-status span:nth-child(3) { margin-left: -9px; }
.ex-status svg { width: 34px; height: 17px; margin-left: auto; }

/* main application window */
.jp { position: absolute; left: 391.500px; top: 132.500px; width: 897px; height: 587px; background: #fff; border: 1px solid #5c6d80; box-shadow: 0 3px 12px rgba(0, 0, 0, .5); display: flex; flex-direction: column; }
.logo { width: 13px; height: 13px; }
.jp-title { height: 24px; display: flex; align-items: center; padding: 0 11px 0 5px; gap: 4px; font-size: 9.800px; letter-spacing: .18px; }
.ctl { width: 84px; height: 12px; margin-left: auto; }
.jp-menu { height: 20.500px; background: linear-gradient(90deg, #f1f1f1, #fdfdfd); display: flex; align-items: center; padding-left: 10.500px; font-size: 9.900px; gap: 15.500px; }
.jp-tools { height: 22px; background: linear-gradient(#fdfdfd, #f0f0f0); border-bottom: 1.500px solid #7a7a7a; padding: 4px 0 0 9.500px; }
.jp-tools svg { width: 180px; height: 14px; }
.mdi { flex: 1; min-height: 0; display: flex; border-left: 1px solid #777; }
.canvas { flex: 1; background: #9b9b9b; position: relative; overflow: hidden; }
.m-scroll { width: 14px; background: #f0f0f0; display: flex; flex-direction: column; align-items: center; justify-content: space-between; padding: 3px 0; }
.m-scroll svg { width: 9px; height: 9px; }
.m-scroll i { width: 12px; height: 430px; margin: 3px 0 auto; background: #c4c5c6; }

/* session child window */
.session { position: absolute; left: 83px; top: 83px; width: 577px; height: 500px; border: 1px solid #3d4a58; border-radius: 5px 5px 0 0; background: linear-gradient(90deg, #8fb0d8, #b4cce8 40%, #a3c8ea); padding: 0 5px; }
.s-title { height: 25px; display: flex; align-items: center; gap: 3px; color: #2c3e55; font-size: 9.900px; letter-spacing: .3px; margin: 0 -5px; padding: 5px 6px 0; background: linear-gradient(#8eaed6, #a9c3e4); border-radius: 4px 4px 0 0; }
.s-btns { margin-left: auto; display: flex; gap: 2px; }
.s-btns b { width: 25.500px; height: 14.500px; border: 1px solid #6f8bb2; border-radius: 2px; background: linear-gradient(#c5d6ec, #97b4d9); display: flex; align-items: center; justify-content: center; }
.s-btns .dim { background: #a9c2e2; border-color: #94b0d4; }
.s-btns .x { background: linear-gradient(#e59a8c, #c9402c 55%, #d96a50); border-color: #6d2a24; }
.s-btns svg { width: 12px; height: 8px; }
.client { background: #f0f0f0; height: 475px; font: 9px/12px "Liberation Mono", monospace; letter-spacing: -.600px; color: #2a2a2a; white-space: nowrap; -webkit-text-stroke: .25px #2a2a2a; }
.tabs { height: 16px; background: #f6f8f8; display: flex; align-items: flex-end; }
.tabs b { font-weight: 400; background: #fff; width: 58px; height: 16px; padding: 2px 0 0 5.500px; }
.tabs span { padding: 0 4.500px 1px 5px; border-right: 1px solid #d5d5d5; }
.page { border-top: 1px solid #dedede; margin: 0 3px; padding-left: 5px; }
.path { display: flex; margin: 7px 0 0 2px; align-items: center; }
.path label { width: 61px; overflow: hidden; }
.path div { width: 485px; height: 16px; border: 1px solid #8f8f8f; padding-left: 2px; line-height: 13px; letter-spacing: -.640px; }
.opts { display: flex; margin: 5px 0 0 180px; }
.chk { width: 136px; height: 38px; padding-top: 20px; display: flex; align-items: center; position: relative; z-index: 1; }
.chk svg { width: 12px; height: 12px; margin-right: 2px; }
.group { border: 1px solid #d9d9d9; }
.legend { background: #f0f0f0; height: 12px; margin: -7px 0 0 4px; width: max-content; padding-right: 3px; }
.delim { width: 131px; height: 38px; margin-right: 5px; }
.miss { width: 96px; height: 38px; }
.delim .legend, .miss .legend { margin-top: -8px; }
.radios { display: grid; grid-template-columns: 55px auto; margin: -2px 0 0 7px; grid-auto-rows: 16.500px; }
.miss .radios { grid-template-columns: 49px auto; }
.radios span, .g5 span { display: flex; align-items: center; }
.radios small { font-size: 6px; margin: -3px 0 0 5px; }
.radios .hid { padding-left: 10px; }
.group i { width: 11px; height: 11px; border: 1px solid #444; border-radius: 50%; background: #fff; margin-right: 3.500px; flex: none; }
.group i.on { background: radial-gradient(#222 0 2.500px, #fff 3.200px); }
.group i.blue { border-color: #2b6cb0; background: radial-gradient(#1c5fa8 0 2.500px, #fff 3.200px); }
.data { width: 551px; height: 111px; margin-top: 5.500px; }
.dl { display: flex; height: 16px; margin-top: -10px; align-items: center; }
.d1 { margin-left: 4.500px; width: 42.500px; overflow: hidden; background: #f0f0f0; }
.d2 { margin-left: 45px; background: #f0f0f0; padding: 0 4px; }
.combo { background: #e0e0e0; border: 1px solid #b9b9b9; height: 16px; padding: 0 3px 0 2px; display: flex; align-items: center; justify-content: space-between; }
.combo svg { width: 8px; height: 8px; }
.combo.ui { width: 33px; font: 9px "Open Sans"; letter-spacing: 0; -webkit-text-stroke: 0; }
.grid { margin: 1px 0 0 8.500px; width: 529px; height: 98.500px; border: 1.500px solid #555; background: #fff; display: grid; grid-template: 83px 1fr / 513.500px 1fr; font: 9.300px/14px "Liberation Sans", Arial, sans-serif; letter-spacing: -.35px; -webkit-text-stroke: 0; }
.cells { overflow: hidden; }
.r { display: grid; grid-template-columns: 80px 79.500px 79.500px 80px 80px 80px 35px; height: 16px; }
.r span { border-right: 1px solid #8c8c8c; border-bottom: 1px solid #8c8c8c; text-align: center; overflow: hidden; }
.r span:first-child { padding-left: 2px; text-align: left; letter-spacing: -.3px; }
.r span:last-child { text-align: right; padding-right: 1px; border-right: 0; }
.r.h { height: 28px; font-weight: 700; letter-spacing: -.1px; }
.r.h span { padding: 12px 0 0; border-color: #ccc; text-align: center; letter-spacing: -.1px; }
.r.h span:last-child { text-align: right; }
.cur span:first-child { background: #0d5fcc; color: #fff; }
.vs { background: #f0f0f0; display: flex; flex-direction: column; align-items: center; padding: 3px 0; }
.vs svg, .hs svg { width: 8px; height: 8px; }
.vs i { width: 12px; height: 13px; border: 0; border-radius: 0; background: #c8c8c8; margin: 3px 0 auto; }
.hs { grid-column: 1 / 3; background: #f0f0f0; display: flex; align-items: center; padding: 0 16px 0 2px; }
.hs i { width: 285px; height: 12px; border: 0; border-radius: 0; background: #c3c3c3; margin: 0 auto 0 4px; }
.lower { display: flex; margin: 8px 0 0 1px; gap: 4.500px; }
.left { width: 295px; }
.rightc { width: 250.500px; }
a { color: #2727cf; text-decoration: underline; -webkit-text-stroke: .25px #2727cf; }
.dep { height: 152px; }
.lrow { display: flex; justify-content: space-between; }
.lrow a { margin-top: -8px; width: 126px; overflow: hidden; margin-right: -2px; background: #f0f0f0; }
.f { display: flex; align-items: center; padding-left: 1px; }
.f label { width: 97px; padding-top: 2px; }
.f1 { margin-top: -1px; }
.f1 .combo { width: 190px; }
.f2 { margin-top: 3px; }
.f2 .combo { width: 93px; height: 15px; }
.rule { height: 2px; background: #8a8a8a; margin: 5px 0 0 5px; width: 273px; }
.f3 { margin-top: 17px; }
.f4 { margin-top: 3.500px; }
.f3 .combo, .f4 .combo { width: 192px; height: 16.500px; }
.het { margin-top: 8px; height: 60px; }
.f5 { margin-top: 1px; }
.f5 label { width: 110.500px; }
.f5 .combo { width: 178.500px; height: 17px; border-left: 0; padding-left: 0; }
.het a { display: block; margin: 3px 0 0 4px; }
.ind { height: 46px; }
.g1 { display: flex; gap: 5px; margin: 2px 0 0 4px; }
.g1 .combo { width: 178px; }
.btn { width: 56.500px; height: 16.500px; border: 1px solid #b3b3b3; background: #dfdfdf; text-align: center; line-height: 14px; }
.btn.focus { border: 2px solid #3f82cf; line-height: 12px; }
.g2 { display: flex; margin: 4px 0 0 130.500px; align-items: center; }
.g2 a { width: 80px; position: relative; z-index: 1; }
.g2 div { width: 33px; height: 16px; background: #fff; border: 1px solid #9a9a9a; }
.byv { height: 111px; margin-top: 10px; }
.g3 { display: flex; gap: 5px; margin: 1px 0 0 4.500px; }
.list { width: 177.500px; height: 74.500px; border: 1px solid #8c8c8c; background: #fff; padding-left: 2px; }
.bcol { display: flex; flex-direction: column; gap: 5.500px; }
.bcol .last { margin-top: 13px; }
.g4 { display: flex; margin: 6.500px 0 0 5.500px; gap: 9.500px; align-items: center; }
.g4 .btn { width: 55px; height: 15.500px; }
.logt { height: 60px; margin-top: 9px; }
.g5 { display: flex; margin: 3px 0 0 11.500px; height: 15px; width: 237px; overflow: hidden; }
.g5 span:first-child { width: 149px; flex: none; }

/* highlight frames */
.mark { position: absolute; border: 3px solid #ea0519; }
.a { left: 556px; top: 499px; width: 224px; height: 59px; }
.b { left: 790px; top: 498px; width: 132px; height: 50px; }
.c { left: 785px; top: 553px; width: 151px; height: 70px; }
.d { left: 558px; top: 565px; width: 136px; height: 73px; }
.e { left: 566px; top: 659px; width: 213px; height: 49px; }
.cursor { position: absolute; left: 997px; top: 704px; width: 10px; height: 16px; }

/* taskbar */
.taskbar { position: absolute; left: 0; right: 0; bottom: 0; height: 32px; display: flex; align-items: center; background: linear-gradient(90deg, #c9dfec, #cfdde6 40%, #d3daee); }
.win { width: 14px; height: 14px; margin: 0 13px 0 12px; }
.search { width: 228px; height: 32px; background: #fff; display: flex; align-items: center; padding: 0 8px 0 9px; font-size: 11px; }
.glass { width: 14px; height: 14px; margin-right: 8px; }
.clover { width: 48px; height: 30px; margin-left: auto; }
.app { width: 32px; height: 32px; margin-left: 7px; border-bottom: 2px solid #1570c8; display: flex; align-items: center; justify-content: center; }
.app svg { width: 20px; height: 20px; }
.app.small svg { width: 17px; height: 17px; margin-top: 1px; }
.search + .app { margin-left: 7px; }
.app.act { width: 38px; background: #edf4f9; margin-left: 4px; }
.tray { margin-left: auto; display: flex; align-items: center; height: 32px; color: #222; }
.t1 { width: 12px; height: 12px; margin-right: 8px; }
.t2 { width: 10px; height: 14px; margin-right: 9px; }
.t3 { width: 12px; height: 13px; margin-right: 10px; }
.t4 { width: 13px; height: 13px; margin-right: 11px; }
.clock { width: 51px; display: flex; flex-direction: column; text-align: center; line-height: 15px; font-size: 9.600px; }
.t5 { width: 20px; height: 20px; margin: 2px 9px 0 13px; }
.tray i { width: 1px; height: 32px; background: #aeb6c6; margin-right: 3px; }
.sharer { position: absolute; left: 112px; top: 942px; width: 90px; height: 15px; background: rgba(0, 0, 0, .85); color: #fff; font: 10.700px/14px "Noto Sans CJK SC", sans-serif; padding-left: 3px; white-space: nowrap; }
```
